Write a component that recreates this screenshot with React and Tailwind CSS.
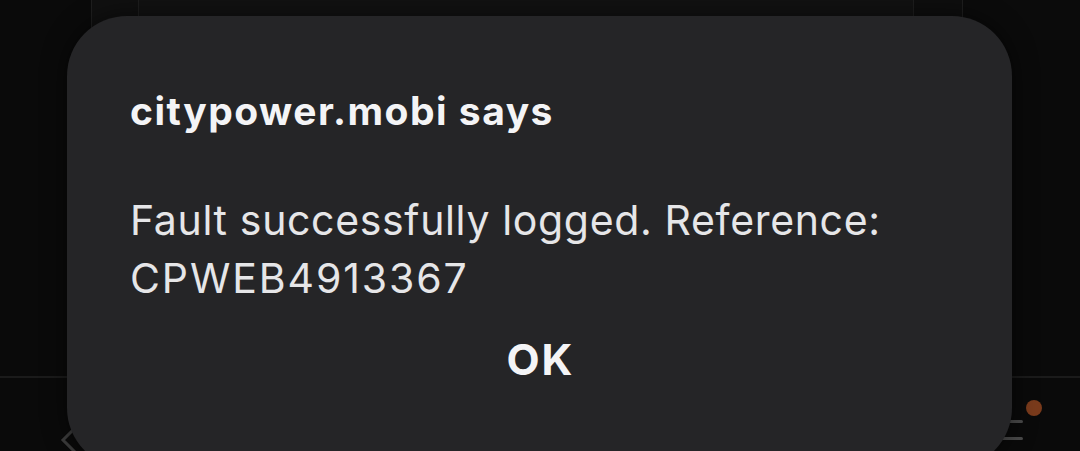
import React from "react";

export default function App() {
  return (
    <div
      className="relative w-[1080px] h-[451px] overflow-hidden bg-[#0a0a0a]"
      style={{ fontFamily: "Inter, Roboto, sans-serif" }}
    >
      {/* dimmed page behind the dialog */}
      <div className="flex flex-col h-full">
        <div className="flex h-[40px] bg-[#101010]">
          <div className="w-[91px] bg-[#0a0a0a]" />
          <div className="w-[47px] border-l border-[#1e1e1e]" />
          <div className="flex-1 border-l border-[#1e1e1e] bg-[#121212]" />
          <div className="w-[49px] border-l border-[#1e1e1e] bg-[#0e0e0e]" />
          <div className="w-[118px] border-l border-[#1e1e1e] bg-[#0b0b0b]" />
        </div>
        <div className="flex-1" />
        <div className="h-[75px] border-t-2 border-[#1b1b1b] flex items-start justify-between">
          <svg width="40" height="40" viewBox="0 0 40 40" className="ml-[48px] mt-[44px]">
            <path d="M27 6 L15 18 L27 30" stroke="#3c3c3c" strokeWidth="3" fill="none" strokeLinecap="round" />
          </svg>
          <div className="relative mr-[25px] mt-[20px] w-[60px] h-[60px]">
            <div className="absolute right-[13px] top-[2px] w-[16px] h-[16px] rounded-full bg-[#7a3b1c]" />
            <div className="absolute left-[0px] top-[22px] w-[28px] h-[3px] rounded-full bg-[#4a4a4a]" />
            <div className="absolute left-[0px] top-[39px] w-[28px] h-[3px] rounded-full bg-[#4a4a4a]" />
          </div>
        </div>
      </div>

      {/* dialog */}
      <div className="absolute left-[67px] top-[16px] w-[945px] h-[452px] rounded-[60px] bg-[#252527] shadow-[0_0_24px_rgba(0,0,0,0.55)] pt-[71px] pl-[63px] pr-[40px] flex flex-col">
        <div className="text-[39px] leading-[48px] font-bold tracking-[1.5px] text-[#f4f4f6]">
          citypower.mobi says
        </div>
        <div className="mt-[56px] text-[41px] leading-[58px] text-[#e6e6e8]">
          <div className="tracking-[0.65px]">Fault successfully logged. Reference:</div>
          <div className="tracking-[1.9px]">CPWEB4913367</div>
        </div>
        <div className="mt-[26px] -ml-[63px] -mr-[40px] flex justify-center">
          <span className="text-[43px] leading-[52px] font-bold tracking-[2px] pl-[2px] text-[#f4f4f6]">OK</span>
        </div>
      </div>
    </div>
  );
}
